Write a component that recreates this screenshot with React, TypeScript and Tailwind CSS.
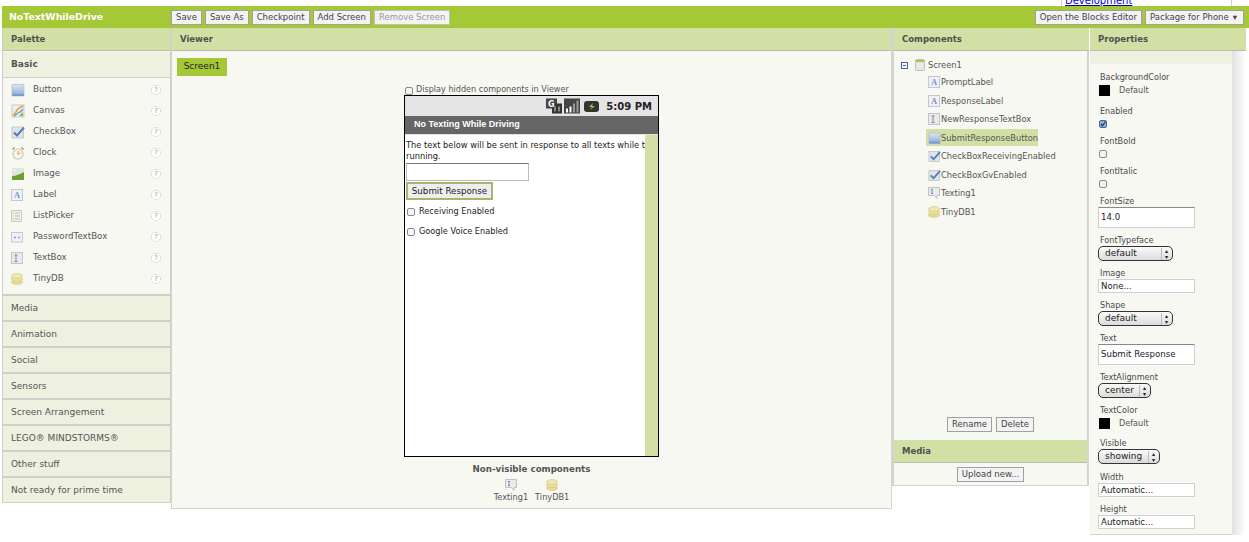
import React from 'react';

const ButtonIcon = () => (
  <svg width="14" height="14" viewBox="0 0 14 14">
    <defs>
      <linearGradient id="btn" x1="0" y1="0" x2="0" y2="1">
        <stop offset="0" stopColor="#dbe6f3" />
        <stop offset="1" stopColor="#88a8d4" />
      </linearGradient>
    </defs>
    <rect x="1" y="1.5" width="12" height="11.5" rx="1" fill="url(#btn)" stroke="#a9b9cf" strokeWidth="0.7" />
    <rect x="1" y="11" width="12" height="2" fill="#7d9bc8" />
  </svg>
);

const CanvasIcon = () => (
  <svg width="14" height="14" viewBox="0 0 14 14">
    <rect x="1" y="1" width="12" height="12" fill="#eef0f2" stroke="#b5b8bc" strokeWidth="0.7" />
    <path d="M2 11 C5 10 5 6 7 5 C8 4 10 3 12 2" fill="none" stroke="#e8a33a" strokeWidth="1.6" />
    <path d="M3 12 C6 11 7 8 9 8 C10 8 11 6 12 5" fill="none" stroke="#6c9bd2" strokeWidth="1.4" />
    <path d="M8 12 L12 8 L12 12 Z" fill="#8db53a" />
  </svg>
);

const CheckIcon = () => (
  <svg width="14" height="14" viewBox="0 0 14 14">
    <rect x="1" y="2" width="11.5" height="11" fill="#e2e3e5" stroke="#b7b9bc" strokeWidth="0.7" />
    <path d="M3 7.5 L6 10.5 L13 2.5" fill="none" stroke="#4c7fc4" strokeWidth="2" />
  </svg>
);

const ClockIcon = () => (
  <svg width="14" height="14" viewBox="0 0 14 14">
    <circle cx="7" cy="8" r="5" fill="#f8f5ea" stroke="#c9c4b4" strokeWidth="1.1" />
    <path d="M7 5 L7 8.5 L9.5 7" fill="none" stroke="#e8a33a" strokeWidth="1" />
    <path d="M1.5 3.5 L3.5 1.5 M12.5 3.5 L10.5 1.5" stroke="#8f8d84" strokeWidth="1.2" />
  </svg>
);

const ImageIcon = () => (
  <svg width="14" height="14" viewBox="0 0 14 14">
    <rect x="1" y="1" width="12" height="12" fill="#dfe6dc" />
    <circle cx="3.5" cy="3.5" r="1" fill="#ffffff" />
    <path d="M1 13 L1 9 C5 9 9 7 13 5 L13 13 Z" fill="#6f9e2c" />
  </svg>
);

const LabelIcon = () => (
  <svg width="12" height="12" viewBox="0 0 12 12">
    <rect x="0.5" y="0.5" width="11" height="11" fill="#eef1f6" stroke="#c3c7cf" />
    <text x="6" y="9" textAnchor="middle" fontSize="8.5" fontWeight="700" fill="#7d95c4" fontFamily="Liberation Serif, serif">A</text>
  </svg>
);

const ListIcon = () => (
  <svg width="12" height="12" viewBox="0 0 12 12">
    <rect x="0.5" y="0.5" width="10" height="11" fill="#f1f2ec" stroke="#c9cac4" />
    <path d="M2 3 H3 M2 6 H3 M2 9 H3" stroke="#9fbf4a" />
    <path d="M4 3 H9 M4 6 H9 M4 9 H9" stroke="#b9bbb4" />
  </svg>
);

const PasswordIcon = () => (
  <svg width="12" height="12" viewBox="0 0 12 12">
    <rect x="0.5" y="1.5" width="11" height="9.5" fill="#eef1f6" stroke="#c3c7cf" />
    <circle cx="4" cy="6.5" r="0.9" fill="#7d95c4" />
    <circle cx="8" cy="6.5" r="0.9" fill="#7d95c4" />
  </svg>
);

const TextBoxIcon = () => (
  <svg width="12" height="12" viewBox="0 0 12 12">
    <rect x="0.5" y="0.5" width="11" height="11" fill="#e9eaec" stroke="#c3c5c8" />
    <path d="M3.5 3 H6.5 M3.5 9.5 H6.5 M5 3 V9.5" stroke="#7d8da8" />
  </svg>
);

const DbIcon = () => (
  <svg width="12" height="12" viewBox="0 0 12 12">
    <ellipse cx="6" cy="9" rx="5.5" ry="2.4" fill="#e6dc96" stroke="#c7bd72" strokeWidth="0.5" />
    <ellipse cx="6" cy="6" rx="5.5" ry="2.4" fill="#ece3a4" stroke="#c7bd72" strokeWidth="0.5" />
    <ellipse cx="6" cy="3" rx="5.5" ry="2.4" fill="#f0e8b2" stroke="#c7bd72" strokeWidth="0.5" />
  </svg>
);

const TextingIcon = () => (
  <svg width="12" height="12" viewBox="0 0 12 12">
    <path d="M0.5 0.5 H11.5 V8.5 H9 V11.5 L6.5 8.5 H0.5 Z" fill="#e9eaec" stroke="#bfc1c4" />
    <path d="M3 2.5 H5 M3 6.5 H5 M4 2.5 V6.5" stroke="#7d8da8" />
  </svg>
);

const ScreenIcon = () => (
  <svg width="10" height="12" viewBox="0 0 10 12">
    <rect x="0.5" y="0.5" width="9" height="11" rx="1" fill="#e8e9e6" stroke="#bfc0bc" />
    <rect x="1" y="1" width="8" height="2" fill="#a9c644" />
  </svg>
);

const HelpIcon = () => (
  <span className="w-[10px] h-[10px] rounded-full border border-dotted border-[#c4c4bc] bg-white text-[7px] leading-[8px] text-center text-[#999]">?</span>
);

const BarButton = ({ label, disabled, children }: { label: string; disabled?: boolean; children?: React.ReactNode }) => (
  <button className={`h-[15px] px-[4px] bg-[#f3f3f3] border border-[#a0a0a0] text-[8.5px] leading-[13px] ${disabled ? 'text-[#999] border-[#c0c0c0]' : 'text-[#444]'}`}>
    {label}
    {children}
  </button>
);

const PanelHeader = ({ title }: { title: string }) => (
  <div className="h-[23px] bg-[#d3e0a5] border-b border-[#b9bcae] flex items-center pt-px text-[8.5px] font-bold text-[#4f4f4f] px-[8px]">
    {title}
  </div>
);

const basicItems: [string, React.ReactNode][] = [
  ['Button', <ButtonIcon />],
  ['Canvas', <CanvasIcon />],
  ['CheckBox', <CheckIcon />],
  ['Clock', <ClockIcon />],
  ['Image', <ImageIcon />],
  ['Label', <LabelIcon />],
  ['ListPicker', <ListIcon />],
  ['PasswordTextBox', <PasswordIcon />],
  ['TextBox', <TextBoxIcon />],
  ['TinyDB', <DbIcon />],
];

const drawers = ['Media', 'Animation', 'Social', 'Sensors', 'Screen Arrangement', 'LEGO® MINDSTORMS®', 'Other stuff', 'Not ready for prime time'];

const treeItems: [string, React.ReactNode, boolean?][] = [
  ['PromptLabel', <LabelIcon />],
  ['ResponseLabel', <LabelIcon />],
  ['NewResponseTextBox', <TextBoxIcon />],
  ['SubmitResponseButton', <ButtonIcon />, true],
  ['CheckBoxReceivingEnabled', <CheckIcon />],
  ['CheckBoxGvEnabled', <CheckIcon />],
  ['Texting1', <TextingIcon />],
  ['TinyDB1', <DbIcon />],
];

const Check = ({ checked }: { checked?: boolean }) => (
  <svg width="8" height="8" viewBox="0 0 8 8" className="block shrink-0">
    <rect x="0.5" y="0.5" width="7" height="7" rx="1.5" fill={checked ? '#8fb0dc' : '#f4f4f4'} stroke={checked ? '#47679a' : '#8a8a8a'} />
    {checked && <path d="M2 4 L3.5 5.8 L6.5 1.5" fill="none" stroke="#1f2f4f" strokeWidth="1.2" />}
  </svg>
);

const PropLabel = ({ text }: { text: string }) => (
  <div className="pl-[2px] text-[8.1px] leading-[11px] text-[#4a4a4a]">{text}</div>
);

const ColorProp = ({ label }: { label: string }) => (
  <div className="pb-[2px]">
    <PropLabel text={label} />
    <div className="flex items-center mt-px pl-px text-[8.1px] text-[#555]">
      <span className="w-[11px] h-[11px] bg-black mr-[9px]" />
      Default
    </div>
  </div>
);

const CheckProp = ({ label, checked }: { label: string; checked?: boolean }) => (
  <div className="h-[23px]">
    <PropLabel text={label} />
    <div className="mt-[3px] pl-px"><Check checked={checked} /></div>
  </div>
);

const TextProp = ({ label, value, tall }: { label: string; value: string; tall?: boolean }) => (
  <div>
    <PropLabel text={label} />
    <div className={`w-[97px] bg-white border border-[#d0d0d0] px-[2px] text-[8.6px] text-[#222] flex items-center ${tall ? 'h-[21px] border-t-[#888]' : 'h-[14px]'}`}>
      {value}
    </div>
  </div>
);

const SelectProp = ({ label, value, width }: { label: string; value: string; width: string }) => (
  <div>
    <PropLabel text={label} />
    <div className={`${width} h-[15px] rounded-[5px] border border-[#333] bg-gradient-to-b from-[#fafafa] to-[#dcdcdc] flex items-center justify-between pl-[6px] pr-[4px] text-[9px] text-[#222]`}>
      {value}
      <span className="text-[6px] leading-[6px] text-center text-[#222] border-l border-[#bbb] pl-[3px]">▴<br />▾</span>
    </div>
  </div>
);

export default function App() {
  return (
    <div className="w-[1249px] h-[542px] overflow-hidden bg-white font-['DejaVu_Sans',sans-serif]">
      {/* leftover menu peeking in above the toolbar */}
      <div className="h-[6px] overflow-hidden flex justify-end pr-[17px]">
        <div className="w-[171px] border-x border-[#ccc] pl-[3px] text-[10px] leading-[10px] text-[#0000cc] underline -mt-[4px]">Development</div>
      </div>

      <div className="ml-[2px] h-[22px] bg-[#a5c836] flex items-center pl-[7px] pr-[5px]">
        <div className="w-[162px] pt-px text-[9.4px] font-bold text-white">NoTextWhileDrive</div>
        <div className="flex gap-[3px]">
          <BarButton label="Save" />
          <BarButton label="Save As" />
          <BarButton label="Checkpoint" />
          <BarButton label="Add Screen" />
          <BarButton label="Remove Screen" disabled />
        </div>
        <div className="ml-auto flex gap-[3px]">
          <BarButton label="Open the Blocks Editor" />
          <BarButton label="Package for Phone">
            <span className="ml-[4px] mr-[2px]">▾</span>
          </BarButton>
        </div>
      </div>

      <div className="flex items-start">
        {/* Palette */}
        <div className="ml-[2px] w-[169px] border-x border-b border-[#cfcfc9] bg-[#f7f8f2]">
          <PanelHeader title="Palette" />
          <div className="h-[26px] mt-px pt-px bg-[#eef1e0] border-b border-[#cfcfc9] flex items-center px-[8px] text-[9px] font-bold text-[#555]">Basic</div>
          <div className="pt-px pb-[5px]">
            {basicItems.map(([label, icon]) => (
              <div key={label} className="h-[21px] flex items-center pl-[8px] pr-[9px] text-[8.7px] text-[#555]">
                <span className="w-[22px] flex justify-start">{icon}</span>
                {label}
                <span className="ml-auto flex"><HelpIcon /></span>
              </div>
            ))}
          </div>
          {drawers.map((d) => (
            <div key={d} className="h-[26px] pt-px bg-[#eef1e0] border-t-2 border-[#cfcfc9] flex items-center px-[8px] text-[9px] text-[#555]">{d}</div>
          ))}
        </div>

        {/* Viewer */}
        <div className="w-[721px] h-[481px] border-x border-b border-[#d4d4ce] bg-[#f7f8f2] flex flex-col">
          <PanelHeader title="Viewer" />
          <div className="ml-[5px] mt-[7px] w-[50px] h-[18px] bg-[#a5c836] text-[9px] text-[#222] flex items-center justify-center">Screen1</div>
          <div className="ml-[233px] mt-[7px] flex items-center gap-[3px] text-[8.1px] text-[#555] h-[12px]">
            <span className="mt-[3px]"><Check /></span>
            Display hidden components in Viewer
          </div>
          <div className="ml-[232px] w-[255px] h-[362px] border border-black bg-white flex flex-col">
            <div className="h-[20px] bg-[#e4e4e4] flex items-center justify-end gap-[2px] pr-[6px]">
              <svg width="16" height="16" viewBox="0 0 16 15">
                <rect x="0" y="0" width="11" height="10" fill="#444" />
                <rect x="6" y="5" width="10" height="10" fill="#333" />
                <text x="2" y="8" fontSize="8" fontWeight="700" fill="#fff" fontFamily="DejaVu Sans, sans-serif">G</text>
                <path d="M9 8 V13 M13 8 V13" stroke="#ddd" />
              </svg>
              <svg width="16" height="16" viewBox="0 0 16 15">
                <rect width="16" height="15" fill="#444" />
                <path d="M2 10 H4 V14 H2 Z M5.5 8 H7.5 V14 H5.5 Z" fill="#fff" />
                <path d="M9 5 H11 V14 H9 Z M12.5 2 H14.5 V14 H12.5 Z" fill="#999" />
              </svg>
              <svg width="16" height="13" viewBox="0 0 16 13" className="ml-px">
                <rect x="1" y="1" width="15" height="11" rx="3" fill="#333" />
                <path d="M10 3 L6 7 H9 L7 10 L12 6 H9 Z" fill="#9ccc3a" />
              </svg>
              <span className="ml-[5px] text-[10px] font-bold text-[#222]">5:09 PM</span>
            </div>
            <div className="h-[18px] bg-[#666] text-white font-bold text-[9px] font-['Liberation_Sans',sans-serif] flex items-center pl-[9px]">No Texting While Driving</div>
            <div className="h-px bg-[#e4e4e4]" />
            <div className="flex-1 flex min-h-0">
              <div className="w-[240px] overflow-hidden pl-px pt-[5px] text-[8.3px] leading-[11px] text-[#222]">
                <div className="whitespace-nowrap">The text below will be sent in response to all texts while the app is</div>
                <div>running.</div>
                <div className="mt-px w-[123px] h-[18px] bg-white border border-[#bbb] border-t-[#777]" />
                <div className="mt-px w-[87px] h-[18px] bg-[#eeeeee] border-2 border-[#a5b76a] flex items-center justify-center text-[8.7px] text-[#222]">Submit Response</div>
                <div className="mt-[4px] h-[14px] flex items-center gap-[4px] pl-px text-[8.2px]"><span className="mt-[2px]"><Check /></span>Receiving Enabled</div>
                <div className="mt-[6px] h-[14px] flex items-center gap-[4px] pl-px text-[8.2px]"><span className="mt-[2px]"><Check /></span>Google Voice Enabled</div>
              </div>
              <div className="ml-auto w-[13px] bg-[#d3e0a5]" />
            </div>
          </div>
          <div className="mt-[6px] ml-[232px] w-[255px] flex flex-col items-center">
            <div className="text-[8.7px] font-bold text-[#555]">Non-visible components</div>
            <div className="flex gap-[7px] mt-[3px] text-[8.2px] text-[#555]">
              <div className="flex flex-col items-center"><TextingIcon />Texting1</div>
              <div className="flex flex-col items-center"><DbIcon />TinyDB1</div>
            </div>
          </div>
        </div>

        {/* Components + Media */}
        <div className="w-[197px] border-x-2 border-[#d4d4ce] bg-[#f7f8f2]">
          <div className="-mr-[2px]"><PanelHeader title="Components" /></div>
          <div className="h-[389px] flex flex-col text-[8.3px] text-[#555] pl-[7px]">
            <div className="flex items-center h-[14px] mt-[7px]">
              <span className="w-[7px] h-[7px] border border-[#4a5fa8] flex items-center justify-center mr-[7px]"><span className="w-[3px] h-px bg-[#4a5fa8]" /></span>
              <span className="mr-[3px] flex"><ScreenIcon /></span>
              Screen1
            </div>
            <div className="pl-[27px] mt-px">
              {treeItems.map(([label, icon, selected]) => (
                <div key={label} className="h-[18.5px] flex items-center">
                  <span className={`flex items-center h-[17px] ${selected ? 'bg-[#d3e0a5] -ml-[2px] pl-[2px]' : ''}`}>
                    <span className="w-[13px] flex">{icon}</span>
                    {label}
                  </span>
                </div>
              ))}
            </div>
            <div className="mt-auto mb-[8px] flex justify-center gap-[4px] pr-[7px]">
              <BarButton label="Rename" />
              <BarButton label="Delete" />
            </div>
          </div>
          <PanelHeader title="Media" />
          <div className="h-[23px] border-b border-[#d4d4ce] flex items-center justify-center">
            <BarButton label="Upload new..." />
          </div>
        </div>

        {/* Properties */}
        <div className="ml-px w-[156px] shrink-0">
          <PanelHeader title="Properties" />
          <div className="flex">
            <div className="w-[142px] h-[484px] bg-[#f7f8f2] border-b border-[#d4d4ce]">
              <div className="h-[13px] bg-[#eef1e0]" />
              <div className="pl-[8px] pt-[8px] flex flex-col gap-[7px]">
                <div className="mb-px"><ColorProp label="BackgroundColor" /></div>
                <CheckProp label="Enabled" checked />
                <CheckProp label="FontBold" />
                <CheckProp label="FontItalic" />
                <TextProp label="FontSize" value="14.0" tall />
                <SelectProp label="FontTypeface" value="default" width="w-[75px]" />
                <TextProp label="Image" value="None..." />
                <SelectProp label="Shape" value="default" width="w-[75px]" />
                <TextProp label="Text" value="Submit Response" tall />
                <SelectProp label="TextAlignment" value="center" width="w-[53px]" />
                <ColorProp label="TextColor" />
                <div className="mb-px"><SelectProp label="Visible" value="showing" width="w-[62px]" /></div>
                <TextProp label="Width" value="Automatic..." />
                <TextProp label="Height" value="Automatic..." />
              </div>
            </div>
            <div className="w-[14px] h-[484px] bg-gradient-to-r from-[#e2e2e2] to-white" />
          </div>
        </div>
      </div>
    </div>
  );
}
